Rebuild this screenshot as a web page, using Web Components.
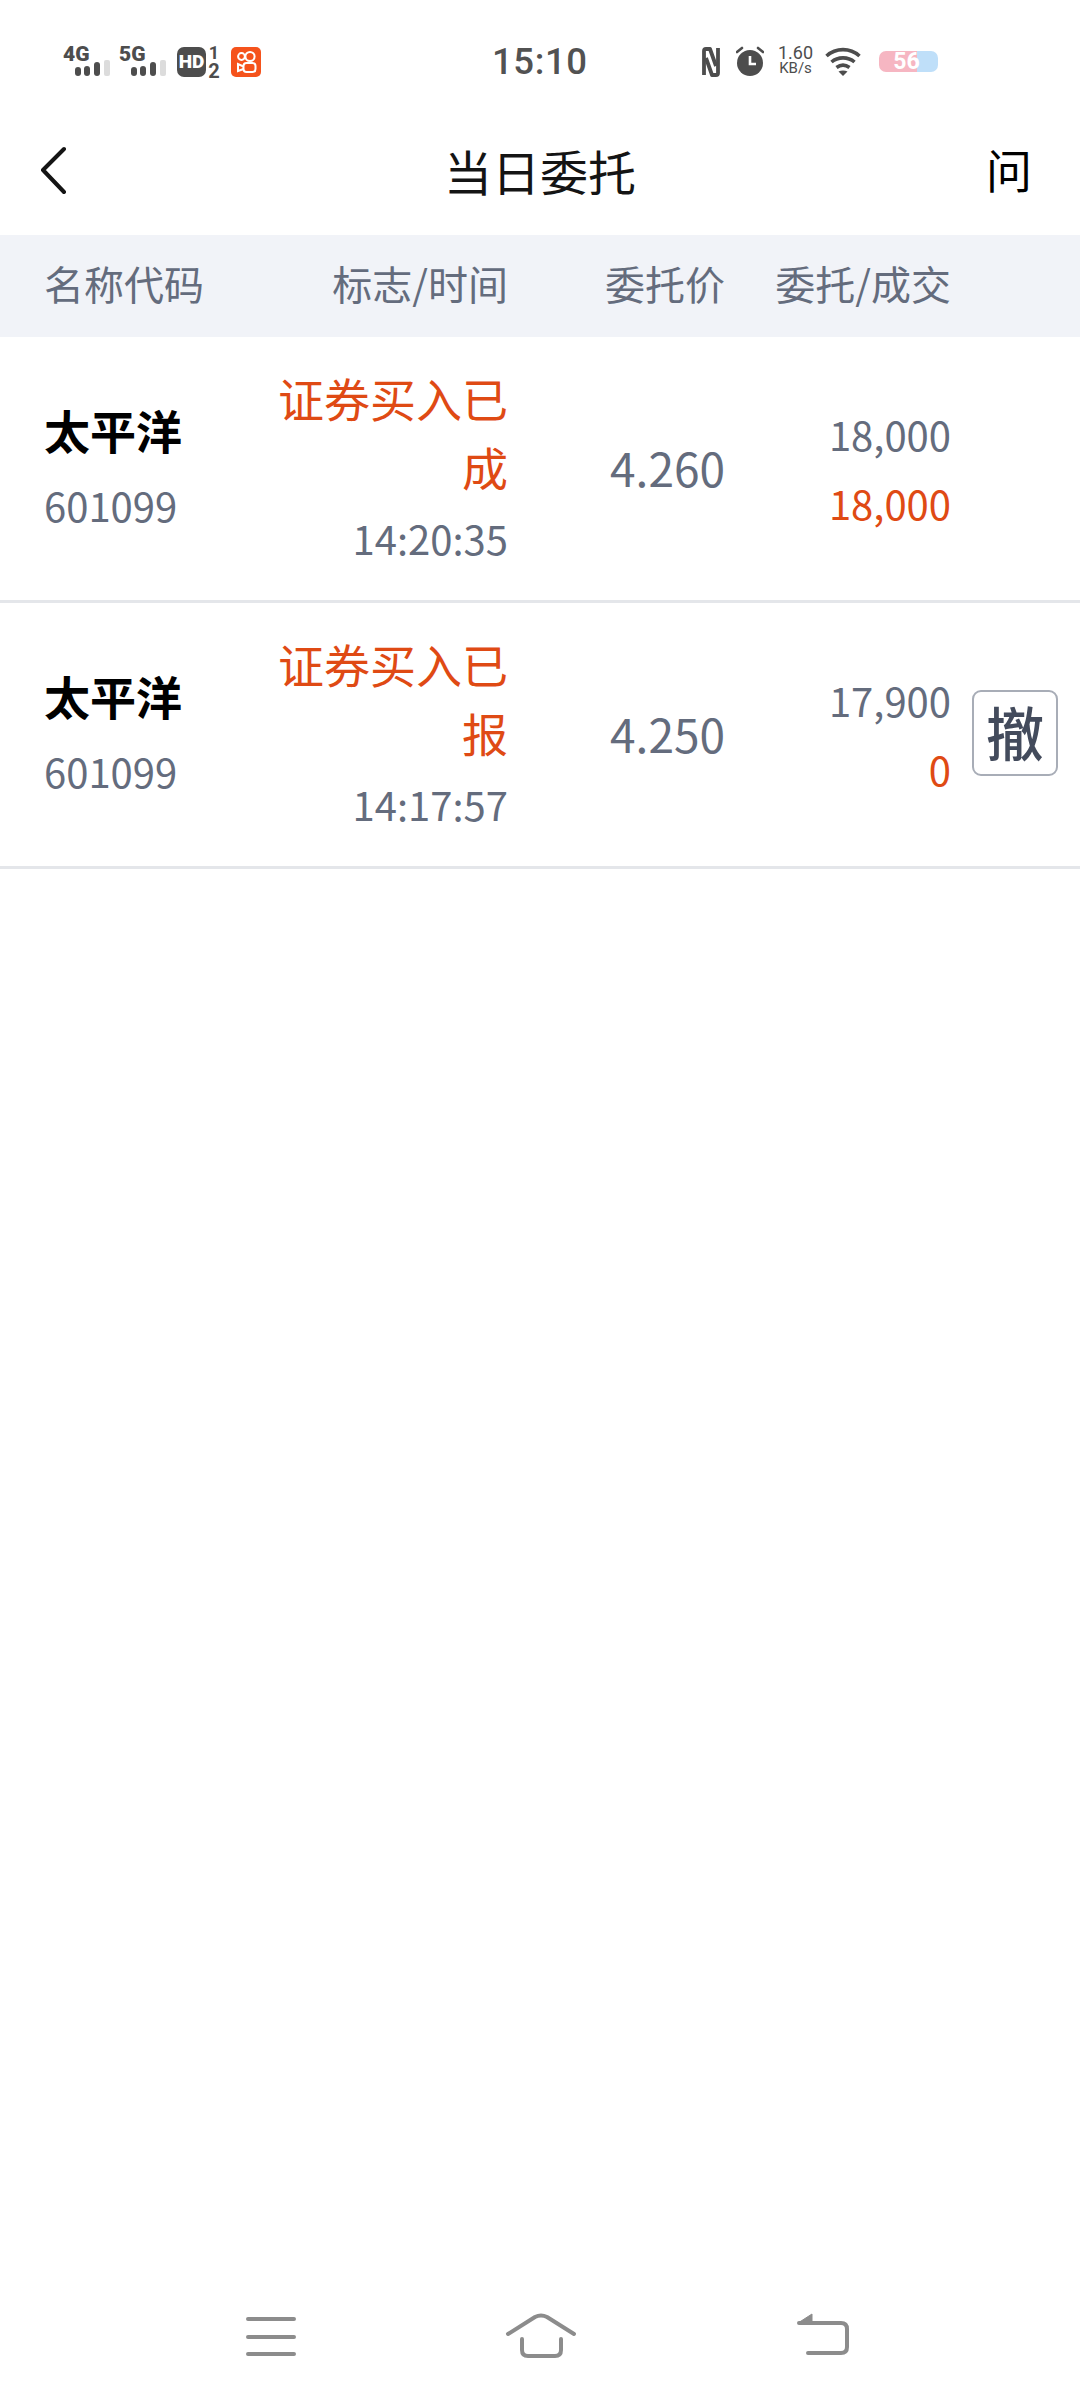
<!DOCTYPE html>
<html lang="zh">
<head>
<meta charset="utf-8">
<title>当日委托</title>
<style>
  html, body { margin: 0; padding: 0; background: #fff; }
  body { font-family: "Noto Sans CJK SC", "Noto Sans", sans-serif; }
</style>
</head>
<body>

<order-page>
  <status-bar slot="status" time="15:10"></status-bar>
  <app-bar slot="bar" action="问">当日委托</app-bar>
  <order-head slot="head"></order-head>

  <order-row>
    <span slot="name">太平洋</span>
    <span slot="code">601099</span>
    <span slot="flag">证券买入已成</span>
    <span slot="time">14:20:35</span>
    <span slot="price">4.260</span>
    <span slot="qty">18,000</span>
    <span slot="done">18,000</span>
  </order-row>
  <order-row cancel>
    <span slot="name">太平洋</span>
    <span slot="code">601099</span>
    <span slot="flag">证券买入已报</span>
    <span slot="time">14:17:57</span>
    <span slot="price">4.250</span>
    <span slot="qty">17,900</span>
    <span slot="done">0</span>
  </order-row>

  <nav-bar slot="nav"></nav-bar>
</order-page>

<script>
(function() {
'use strict';

// grid tracks shared by the head band and the rows
const COLS = 'grid-template-columns: 224px 240px 217px 226px 1fr;';

customElements.define('order-page', class extends HTMLElement {
  constructor() {
    super();
    this.attachShadow({mode: 'open'}).innerHTML = `
      <style>
        :host { display: flex; flex-direction: column; height: 2400px; background: #fff; }
        main { flex: 1; }
      </style>
      <slot name="status"></slot>
      <slot name="bar"></slot>
      <slot name="head"></slot>
      <main><slot></slot></main>
      <slot name="nav"></slot>
    `;
  }
});

customElements.define('status-bar', class extends HTMLElement {
  constructor() {
    super();
    const ink = '#4d4d4d';
    const sig = (label) => `
      <div class="stack sig">
        <span class="tag">${label}</span>
        <svg width="48" height="32" viewBox="0 0 48 32">
          <rect x="12" y="22" width="6" height="9" rx="3" fill="${ink}"/>
          <rect x="21" y="21" width="6" height="10" rx="3" fill="${ink}"/>
          <rect x="31" y="17" width="6" height="14" rx="3" fill="${ink}"/>
          <rect x="41" y="15" width="6" height="16" rx="2" fill="#dcdcdc"/>
        </svg>
      </div>`;
    this.attachShadow({mode: 'open'}).innerHTML = `
      <style>
        :host { display: grid; grid-template-columns: 429px 93px 1fr; height: 110px; box-sizing: border-box;
          padding: 45px 142px 0 63px; color: ${ink}; font-family: Roboto, sans-serif; }
        .left, .right { display: flex; align-items: flex-start; }
        .right { justify-content: flex-end; }
        .time { font-size: 36.5px; font-weight: 500; line-height: 34px; color: #525252; text-align: center; letter-spacing: .6px; white-space: nowrap; }
        svg { display: block; flex: none; }
        .stack { display: grid; flex: none; }
        .stack > * { grid-area: 1 / 1; }
        .sig { width: 48px; height: 32px; }
        .tag { font-size: 21px; font-weight: 900; line-height: 18px; height: 18px; white-space: nowrap; }
        .hd { width: 29px; height: 30px; margin: 2px 0 0 10px; background: ${ink}; border-radius: 7px;
          display: flex; align-items: center; justify-content: center;
          color: #fff; font-size: 19px; font-weight: 900; line-height: 30px; }
        .sim { width: 14px; margin-left: 1px; display: flex; flex-direction: column; align-items: center; font-weight: 700; }
        .sim span { height: 16px; line-height: 16px; font-size: 18px; }
        .sim span + span { margin-top: 2px; font-size: 20px; }
        .speed { width: 37px; margin-left: 13px; display: flex; flex-direction: column; align-items: center; white-space: nowrap; }
        .speed span { font-size: 18px; line-height: 16px; height: 16px; }
        .speed span + span { font-size: 15px; line-height: 15px; height: 15px; }
        .bat { width: 59px; height: 21px; margin: 6px 0 0 18px; border-radius: 7px;
          background: linear-gradient(90deg, #f6b6c2 64%, #bfdff9 64%);
          color: #fff; font-size: 23px; font-weight: 700; line-height: 21px; text-align: center; padding-right: 4px; box-sizing: border-box; }
      </style>
      <div class="left">
        ${sig('4G')}
        <span style="width:8px"></span>
        ${sig('5G')}
        <div class="hd">HD</div>
        <div class="sim"><span>1</span><span>2</span></div>
        <svg style="margin-left:10px" width="30" height="32" viewBox="0 0 30 32">
          <rect x="0" y="2" width="30" height="30" rx="5" fill="#f5531c"/>
          <g fill="none" stroke="#fff" stroke-width="2">
            <circle cx="10.5" cy="11.5" r="3.4"/>
            <circle cx="19" cy="11.5" r="4.6"/>
            <rect x="12.500" y="18" width="12" height="9" rx="3"/>
            <path d="M12.500 21.500 L7 19 V26 L12.500 24"/>
          </g>
        </svg>
      </div>
      <div class="time">${this.getAttribute('time')}</div>
      <div class="right">
        <svg width="18" height="32" viewBox="0 0 18 32">
          <path d="M2 30 V6 Q2 4 4 4 H8 L14 21" fill="none" stroke="${ink}" stroke-width="3.8" stroke-linejoin="round"/>
          <path d="M16 3 V28 Q16 30 14 30 H10 L4 13" fill="none" stroke="${ink}" stroke-width="3.8" stroke-linejoin="round"/>
        </svg>
        <svg style="margin-left:16px" width="28" height="32" viewBox="0 0 28 32">
          <circle cx="14" cy="18" r="13" fill="${ink}"/>
          <path d="M14 11 V19 H20" fill="none" stroke="#fff" stroke-width="2.6"/>
          <path d="M1 7 L6 3 M27 7 L22 3" stroke="${ink}" stroke-width="2.6" stroke-linecap="round"/>
        </svg>
        <div class="speed"><span>1.60</span><span>KB/s</span></div>
        <svg style="margin-left:11px" width="36" height="32" viewBox="0 0 36 32">
          <g fill="none" stroke="${ink}" stroke-width="3.6">
            <path d="M1.500 11 C11 2.500 25 2.500 34.500 11"/>
            <path d="M6.500 17 C13 11.500 23 11.500 29.500 17"/>
            <path d="M11.500 22.500 C15.500 19.500 20.500 19.500 24.500 22.500"/>
          </g>
          <path d="M13.500 26.500 C16 25 20 25 22.500 26.500 L18 31 Z" fill="${ink}"/>
        </svg>
        <div class="bat">56</div>
      </div>
    `;
  }
});

customElements.define('app-bar', class extends HTMLElement {
  constructor() {
    super();
    this.attachShadow({mode: 'open'}).innerHTML = `
      <style>
        :host { display: grid; grid-template-columns: 1fr auto 1fr; align-items: center; height: 125px;
          color: #141414; font-size: 48px; }
        svg { display: block; margin: 0 0 6px 38px; }
        .act { justify-self: end; margin: 0 48px 10px 0; font-size: 46px; line-height: 60px; color: #000; }
        .title { line-height: 60px; margin-bottom: 6px; }
      </style>
      <svg width="30" height="48" viewBox="0 0 30 48">
        <path d="M26 3 L5 24 L26 46" fill="none" stroke="#141414" stroke-width="4" stroke-linecap="round" stroke-linejoin="round"/>
      </svg>
      <div class="title"><slot></slot></div>
      <div class="act">${this.getAttribute('action')}</div>
    `;
  }
});

customElements.define('order-head', class extends HTMLElement {
  constructor() {
    super();
    this.attachShadow({mode: 'open'}).innerHTML = `
      <style>
        :host { display: grid; ${COLS} align-items: center; height: 102px; box-sizing: border-box;
          padding: 0 0 6px 44px; background: #f1f3f8; color: #646c7d; font-size: 40px; }
        div { text-align: right; white-space: nowrap; }
        div:first-of-type { text-align: left; }
      </style>
      <div>名称代码</div>
      <div>标志/时间</div>
      <div>委托价</div>
      <div>委托/成交</div>
    `;
  }
});

customElements.define('order-row', class extends HTMLElement {
  constructor() {
    super();
    const btn = this.hasAttribute('cancel') ? '<div class="btn">撤</div>' : '';
    this.attachShadow({mode: 'open'}).innerHTML = `
      <style>
        :host { display: grid; ${COLS} align-items: center; height: 266px; box-sizing: border-box; padding-left: 44px;
          border-bottom: 3px solid #e4e6ea; color: #646c7d; font-size: 40px; line-height: 69px; }
        .name { color: #000; font-size: 46px; font-weight: 700; line-height: 73px; margin: -5px 0 5px; }
        .flag { color: #df4a14; font-size: 46px; margin: -2px 0 3px; }
        .r { text-align: right; }
        .price { font-size: 46px; padding-bottom: 3px; }
        .done { color: #df4a14; }
        .btn { width: 86px; height: 86px; margin: 0 0 3px 21px; padding-bottom: 5px; box-sizing: border-box;
          display: flex; align-items: center; justify-content: center;
          border: 2px solid #a8adb7; border-radius: 9px;
          color: #434b5c; font-size: 58px; font-weight: 500; line-height: 1; }
      </style>
      <div>
        <div class="name"><slot name="name"></slot></div>
        <div><slot name="code"></slot></div>
      </div>
      <div class="r">
        <div class="flag"><slot name="flag"></slot></div>
        <div><slot name="time"></slot></div>
      </div>
      <div class="r price"><slot name="price"></slot></div>
      <div class="r">
        <div><slot name="qty"></slot></div>
        <div class="done"><slot name="done"></slot></div>
      </div>
      <div>${btn}</div>
    `;
  }
});

customElements.define('nav-bar', class extends HTMLElement {
  constructor() {
    super();
    this.attachShadow({mode: 'open'}).innerHTML = `
      <style>
        :host { display: flex; align-items: flex-start; height: 88px; padding-left: 244px; }
        svg { display: block; flex: none; }
        g { fill: none; stroke: #8c8c8c; stroke-width: 4; stroke-linecap: round; stroke-linejoin: round; }
      </style>
      <svg width="54" height="48" viewBox="0 0 54 48">
        <g><path d="M4 7 H50 M4 25 H50 M4 42 H50"/></g>
      </svg>
      <svg width="74" height="48" viewBox="0 0 74 48" style="margin-left:206px">
        <g><path d="M4 22 L31 5 Q37 2 43 5 L70 22"/><path d="M18 27 V38 Q18 44 24 44 H51 Q57 44 57 38 V27"/></g>
      </svg>
      <svg width="56" height="48" viewBox="0 0 56 48" style="margin-left:219px">
        <g><path d="M11 41 H44 Q50 41 50 35 V17 Q50 11 44 11 H2"/></g>
        <path d="M1 11 L15 2 V12 Z" fill="#8c8c8c" stroke="#8c8c8c" stroke-width="1" stroke-linejoin="round"/>
      </svg>
    `;
  }
});

})();
</script>
</body>
</html>
